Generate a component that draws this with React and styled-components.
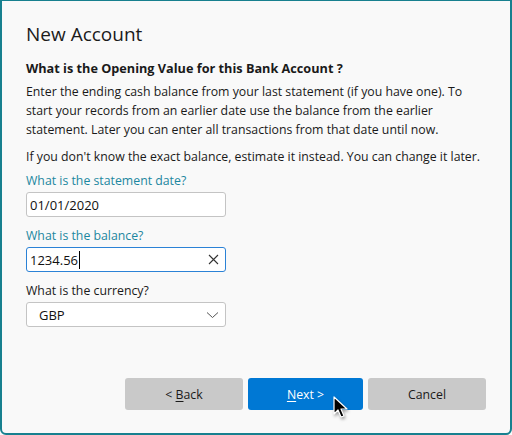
import React from 'react'
import styled, { createGlobalStyle } from 'styled-components'

const Global = createGlobalStyle`
  html, body {
    margin: 0;
    padding: 0;
    background: #f9f9f9;
  }
  body {
    font-family: "Open Sans", "Noto Sans", sans-serif;
  }
`

const Window = styled.div`
  box-sizing: border-box;
  width: 512px;
  height: 435px;
  border: 1px solid #17808f;
  border-width: 1px 2px 2px 2px;
  border-radius: 0 0 6px 6px;
  background: #f9f9f9;
  padding: 20px 24px 0 24px;
  display: flex;
  flex-direction: column;
  position: relative;
  color: #1a1a1a;
`

const Title = styled.h1`
  margin: 0;
  font-size: 19px;
  font-weight: 400;
  line-height: 26px;
  color: #1b1b1b;
`

const Heading = styled.h2`
  margin: 12px 0 0 0;
  font-size: 12.7px;
  font-weight: 700;
  line-height: 18px;
`

const Para = styled.p`
  margin: ${p => p.$top || 5}px 0 0 0;
  font-size: 12.3px;
  line-height: 19px;
  white-space: nowrap;
`

const Label = styled.label`
  display: block;
  margin-top: ${p => p.$top || 8}px;
  font-size: 12.3px;
  line-height: 17px;
  color: ${p => (p.$accent ? '#1c87a0' : '#1a1a1a')};
`

const Field = styled.div`
  box-sizing: border-box;
  margin-top: 3px;
  width: 200px;
  height: 25px;
  background: #fff;
  border: 1px solid ${p => (p.$focus ? '#2b82d6' : '#c4c4c4')};
  border-radius: 3px;
  display: flex;
  align-items: center;
  padding: 0 6px 0 ${p => p.$pad || 3}px;
  font-size: 13px;
  color: #111;
`

const Value = styled.span`
  flex: 1;
  display: flex;
  align-items: center;
`

const Caret = styled.span`
  display: inline-block;
  width: 1px;
  height: 18px;
  background: #000;
  margin-left: 1px;
`

const Buttons = styled.div`
  margin-top: auto;
  margin-bottom: 23px;
  align-self: flex-end;
  display: flex;
  gap: 5px;
`

const Button = styled.div`
  width: ${p => p.$w || 118}px;
  height: 32px;
  border-radius: 3px;
  display: flex;
  align-items: center;
  justify-content: center;
  font-size: 12.3px;
  white-space: pre;
  background: ${p => (p.$primary ? '#0078d4' : '#c9c9c9')};
  color: ${p => (p.$primary ? '#fff' : '#1a1a1a')};
`

const Key = styled.span`
  text-decoration: underline;
  text-underline-offset: 2px;
`

const Pointer = styled.svg`
  position: absolute;
  left: 331px;
  top: 395px;
  filter: drop-shadow(1px 2px 1.5px rgba(0, 0, 0, 0.35));
`

const Cross = () => (
  <svg width="11" height="11" viewBox="0 0 11 11">
    <path d="M1 1L10 10M10 1L1 10" stroke="#333" strokeWidth="1.1" />
  </svg>
)

const Chevron = () => (
  <svg width="13" height="8" viewBox="0 0 13 8">
    <path d="M1 1.5L6.5 6.5L12 1.5" stroke="#555" strokeWidth="1" fill="none" />
  </svg>
)

export default function App() {
  return (
    <>
      <Global />
      <Window>
        <Title>New Account</Title>
        <Heading>What is the Opening Value for this Bank Account ?</Heading>
        <Para>
          Enter the ending cash balance from your last statement (if you have one). To
          <br />
          start your records from an earlier date use the balance from the earlier
          <br />
          statement. Later you can enter all transactions from that date until now.
        </Para>
        <Para $top={8}>
          If you don't know the exact balance, estimate it instead. You can change it later.
        </Para>
        <Label $accent $top={6}>What is the statement date?</Label>
        <Field>
          <Value>01/01/2020</Value>
        </Field>
        <Label $accent $top={10}>What is the balance?</Label>
        <Field $focus>
          <Value>1234.56<Caret /></Value>
          <Cross />
        </Field>
        <Label $top={10}>What is the currency?</Label>
        <Field $pad={12}>
          <Value>GBP</Value>
          <Chevron />
        </Field>
        <Buttons>
          <Button><span>&lt; <Key>B</Key>ack</span></Button>
          <Button $primary $w={115}><span><Key>N</Key>ext &gt;</span></Button>
          <Button>Cancel</Button>
        </Buttons>
        <Pointer width="16" height="24" viewBox="0 0 16 24">
          <path d="M1 1L1 18L5 14L8 21L11 20L8 13L14 13Z" fill="#000" stroke="#fff" strokeWidth="1.2" strokeLinejoin="round" />
        </Pointer>
      </Window>
    </>
  )
}
